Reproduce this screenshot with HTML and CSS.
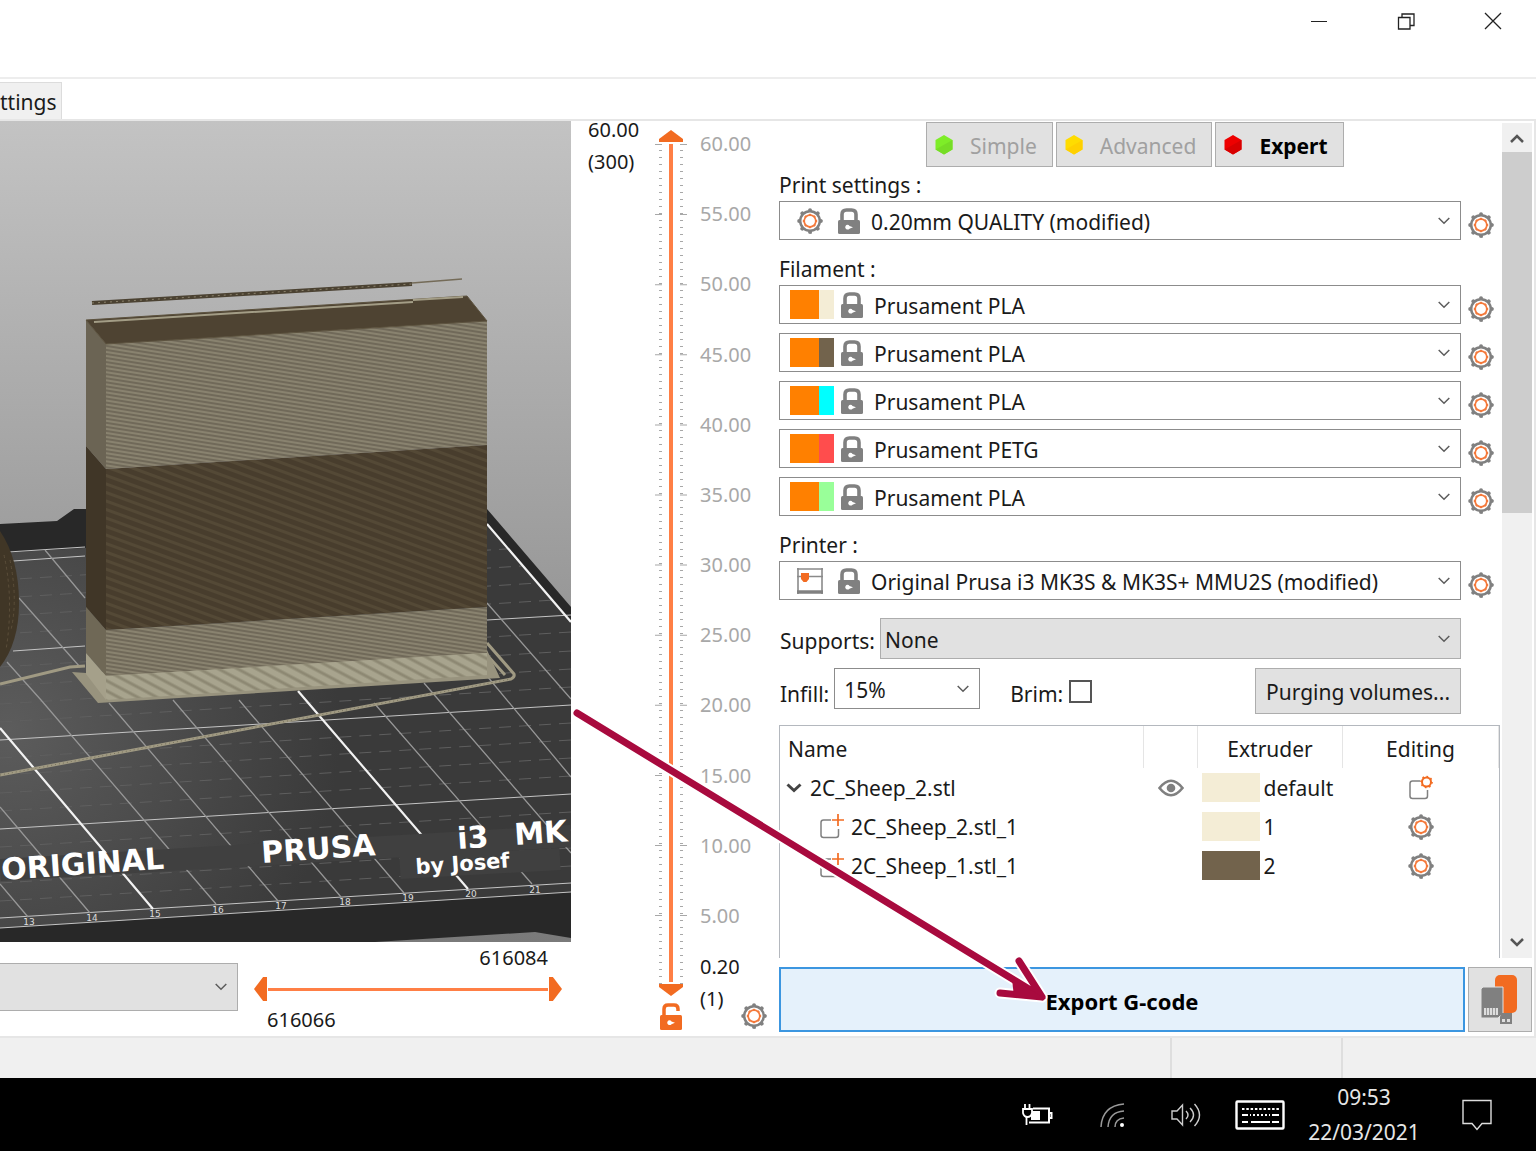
FILE: index.html
```html
<!DOCTYPE html>
<html lang="en">
<head>
<meta charset="utf-8">
<meta name="viewport" content="width=device-width, initial-scale=1">
<title>PrusaSlicer</title>
<link rel="stylesheet" href="styles.css">
</head>
<body>
<svg class="defs" aria-hidden="true">
  <symbol id="gear" viewBox="0 0 26 26">
    <circle cx="13" cy="13" r="9.8" fill="#fff" stroke="#808080" stroke-width="2.500"/>
    <circle cx="13" cy="13" r="10.9" fill="none" stroke="#808080" stroke-width="3.800" stroke-linecap="round" pathLength="80" stroke-dasharray="0.100 9.900"/>
    <circle cx="13" cy="13" r="5.800" fill="none" stroke="#f4793b" stroke-width="1.700"/>
    <circle cx="13" cy="13" r="6.600" fill="none" stroke="#f4793b" stroke-width="1.200" pathLength="80" stroke-dasharray="5 5" stroke-dashoffset="2.500"/>
  </symbol>
  <symbol id="lock" viewBox="0 0 22 26">
    <path d="M4 13V6.500Q4 2 8.500 2H13.500Q18 2 18 6.500V13" fill="none" stroke="#808080" stroke-width="3.600"/>
    <rect y="12" width="22" height="14" rx="1.500" fill="#808080"/>
    <path d="M9.500 16.800a2.400 2.400 0 1 0 2 3.900L15 19.300l-3.500-1.300a2.400 2.400 0 0 0-2-1.200z" fill="#fff"/>
  </symbol>
  <symbol id="chevron" viewBox="0 0 12 8"><path d="M.7 1l5.300 5.300L11.300 1" fill="none" stroke="#5c5c5c" stroke-width="1.500"/></symbol>
  <symbol id="part" viewBox="0 0 26 26">
    <path d="M12 6H4.500Q2 6 2 8.500V21Q2 23.500 4.500 23.500H17Q19.500 23.500 19.500 21V15" fill="none" stroke="#808080" stroke-width="1.500"/>
    <path d="M19 0v12M13 6h12" stroke="#f26b21" stroke-width="1.700"/>
  </symbol>
</svg>

<header class="titlebar">
  <button class="win-btn" aria-label="Minimize"><svg width="18" height="18"><path d="M1 9.500h16" stroke="#222" fill="none"/></svg></button>
  <button class="win-btn" aria-label="Restore"><svg width="18" height="18" fill="none" stroke="#222" stroke-width="1.300"><path d="M1.500 5.500h11.500v11.500h-11.500zM5 5.500V2h12v11.500h-4"/></svg></button>
  <button class="win-btn" aria-label="Close"><svg width="18" height="18"><path d="M1 1l16 16M17 1L1 17" stroke="#222" stroke-width="1.300"/></svg></button>
</header>
<nav class="tabs"><button class="tab">ttings</button></nav>

<main class="main">
  <section class="preview">
    <svg class="scene" viewBox="0 121 571 821" preserveAspectRatio="xMinYMin slice" role="img" aria-label="Sliced model on the print bed">
      <defs>
        <linearGradient id="sky" x1="0" y1="0" x2="0" y2="1"><stop offset="0" stop-color="#c3c3c3"/><stop offset="1" stop-color="#7a7a7a"/></linearGradient>
        <radialGradient id="bed" gradientUnits="userSpaceOnUse" cx="10" cy="730" r="330"><stop offset="0" stop-color="#5c5c5c"/><stop offset="1" stop-color="#3a3a3a"/></radialGradient>
        <clipPath id="sheet"><path d="M0 553l487-29 84 98v270L0 928z"/></clipPath>
        <pattern id="light" width="20" height="4" patternUnits="userSpaceOnUse" patternTransform="rotate(9)"><rect width="20" height="4" fill="#7c7564"/><path d="M0 1h20" stroke="#645d4d"/><path d="M0 3h20" stroke="#969079"/></pattern>
        <pattern id="dark" width="40" height="8" patternUnits="userSpaceOnUse" patternTransform="rotate(20)"><rect width="40" height="8" fill="#483d2d"/><path d="M0 2.500h40" stroke="#544936" stroke-width="3"/></pattern>
        <pattern id="pale" width="40" height="9" patternUnits="userSpaceOnUse" patternTransform="rotate(28)"><rect width="40" height="9" fill="#a8a48e"/><path d="M0 2h40" stroke="#8d8873" stroke-width="3"/></pattern>
      </defs>
      <path fill="url(#sky)" d="M0 121h571v821H0z"/>
      <path fill="#282828" d="M0 524l57-3 17-12h413l84 98v331l-36-6-160 10H0z"/>
      <path fill="url(#bed)" d="M0 553l487-29 84 98v270L0 928z"/>
      <g stroke="#5f5f5f" stroke-dasharray="12 8" clip-path="url(#sheet)">
        <path d="M0 580l571-35M0 598l571-35M0 616l571-35M0 634l571-35M0 667l571-35M0 686l571-35M0 704l571-35M0 722l571-35M0 758l571-35M0 775l571-35M0 793l571-35M0 811l571-35M0 847l571-35M0 865l571-35M0 883l571-35M0 901l571-35"/>
      </g>
      <path d="M8 552l77-5M13 561l72-5M13 651l72-5M487 620l84-5M0 740l571-35M0 829l571-35M0 918l571-35M0 928l571-36" stroke="#c4c4c4" fill="none"/>
      <path d="M45 550l40 48M19 598l61 69M7 662l34 38 175 204M109 703l169 198M173 700l168 197M239 700l165 193M374 703l158 181M424 683l147 170M487 676l84 101M487 603l84 96M0 807l90 106M0 884l28 33" stroke="#979797" fill="none" stroke-width="1.300"/>
      <path d="M0 728l153 181M298 691l170 198M487 524l84 98" stroke="#f2f2f2" fill="none" stroke-width="2.200"/>
      <path d="M0 870L571 836M400 868l160-9" stroke="#404040" stroke-width="22"/>
      <path fill="#403626" d="M0 531q19 28 19 72 0 40-19 64z"/>
      <path d="M4 555q10 45 2 95M10 560q8 40 1 70" stroke="#5b4e3a" fill="none" stroke-dasharray="3 3"/>
      <path d="M0 775l511-96q4-2 3-5l-27-31M487 655l18 20M0 684l70-17 15-1" fill="none" stroke="#a09a83" stroke-width="3"/>
      <path d="M0 775l511-96" stroke="#77715c" stroke-dasharray="1 3" fill="none"/>
      <path fill="#98937e" d="M72 672l14 1 401-23 13 28-402 25z"/>
      <path fill="#6b6454" d="M86 320l20 24v125l-20-23z"/>
      <path fill="#403627" d="M86 446l20 23v161l-20-23z"/>
      <path fill="#6f6856" d="M86 607l20 23v46l-20-23z"/>
      <path fill="#a5a08a" d="M86 653l20 23v24l-20-26z"/>
      <path fill="url(#light)" d="M106 344l381-23v124l-381 24z"/>
      <path fill="url(#dark)" d="M106 469l381-24v162l-381 23z"/>
      <path fill="url(#light)" d="M106 630l381-23v46l-381 23z"/>
      <path fill="url(#pale)" d="M106 676l381-23v22l-381 25z"/>
      <path fill="#4e4332" stroke="#5d533f" d="M86 320l381-24 20 25-381 23z"/>
      <path d="M94 322l319-20M413 300l50-3" stroke="#a39d86" stroke-width="2"/>
      <path d="M92 303l320-19" stroke="#4b4232" stroke-width="4"/>
      <path d="M92 303l320-19" stroke="#8b826c" stroke-dasharray="2 4"/>
      <path d="M412 283l50-4" stroke="#746b58" stroke-width="1.500"/>
      <g class="bed-title">
        <text transform="translate(2 880) rotate(-4)">ORIGINAL</text>
        <text transform="translate(262 863) rotate(-4)">PRUSA</text>
        <text transform="translate(458 849) rotate(-4)">i3</text>
        <text transform="translate(515 845) rotate(-4)">MK</text>
      </g>
      <text class="bed-author" transform="translate(416 874) rotate(-4)">by Josef</text>
      <g class="bed-scale">
        <text x="29" y="925">13</text><text x="92" y="921">14</text><text x="155" y="917">15</text><text x="218" y="913">16</text><text x="281" y="909">17</text><text x="345" y="905">18</text><text x="408" y="901">19</text><text x="471" y="897">20</text><text x="535" y="893">21</text>
      </g>
    </svg>
    <div class="moves">
      <div class="view-select"><select aria-label="View"><option></option></select><svg class="chev"><use href="#chevron"/></svg></div>
      <div class="hslider">
        <output class="max">616084</output>
        <div class="hrange">
          <input type="range" class="r-low" min="0" max="100" value="0" aria-label="First move">
          <input type="range" class="r-high" min="0" max="100" value="100" aria-label="Last move">
        </div>
        <output class="min">616066</output>
      </div>
    </div>
  </section>

  <section class="layers">
    <div class="current"><span>60.00</span><span>(300)</span></div>
    <div class="track">
      <svg class="ticks" width="32" height="870" viewBox="0 0 32 870">
        <g stroke="#a8a8a8" fill="none">
          <path d="M5.500 7V842M26.500 7V842" stroke-width="3" stroke-dasharray="1 6"/>
          <path d="M3.500 1V842M28.500 1V842" stroke-width="7" stroke-dasharray="1 69.100"/>
        </g>
      </svg>
      <div class="vrange">
        <input type="range" class="r-top" min="0" max="300" value="300" aria-label="Top layer">
        <input type="range" class="r-bottom" min="0" max="300" value="0" aria-label="Bottom layer">
      </div>
      <button class="bare unlock" aria-label="Unlock"><svg width="24" height="27" viewBox="0 0 24 27"><path d="M5 13V6Q5 2 9 2H15Q19 2 19 6V8" fill="none" stroke="#f26b21" stroke-width="3.500"/><rect x="1" y="12" width="22" height="15" rx="1.500" fill="#f26b21"/><path d="M10.500 17.300a2.400 2.400 0 1 0 2 3.900L16 19.800l-3.500-1.300a2.400 2.400 0 0 0-2-1.200z" fill="#fff"/></svg></button>
    </div>
    <div class="scale">
      <ol>
        <li>60.00</li><li>55.00</li><li>50.00</li><li>45.00</li><li>40.00</li><li>35.00</li><li>30.00</li><li>25.00</li><li>20.00</li><li>15.00</li><li>10.00</li><li>5.00</li>
      </ol>
      <div class="lowest"><span>0.20</span><span>(1)</span></div>
      <button class="bare layer-gear" aria-label="Slider settings"><svg class="gear"><use href="#gear"/></svg></button>
    </div>
  </section>

  <section class="panel">
    <div class="panel-body">
      <div class="form">
        <div class="modes">
          <button class="mode"><svg width="18" height="20"><path d="M9 0l8.500 5v9.500L9 19.500.5 14.500V5z" fill="#7eed28"/><path d="M17.500 5v9.500L9 19.500.5 14.500z" fill="#76dd26"/></svg><span>Simple</span></button>
          <button class="mode"><svg width="18" height="20"><path d="M9 0l8.500 5v9.500L9 19.500.5 14.500V5z" fill="#ffdc00"/><path d="M17.500 5v9.500L9 19.500.5 14.500z" fill="#ffd000"/></svg><span>Advanced</span></button>
          <button class="mode active"><svg width="18" height="20"><path d="M9 0l8.500 5v9.500L9 19.500.5 14.500V5z" fill="#ee0000"/><path d="M17.500 5v9.500L9 19.500.5 14.500z" fill="#d80000"/></svg><span>Expert</span></button>
        </div>

        <label class="caption" for="print">Print settings :</label>
        <div class="line">
          <div class="combo preset"><svg class="gear"><use href="#gear"/></svg><svg class="lock"><use href="#lock"/></svg><select id="print"><option>0.20mm QUALITY (modified)</option></select><svg class="chev"><use href="#chevron"/></svg></div>
          <button class="bare edit" aria-label="Edit print settings"><svg class="gear"><use href="#gear"/></svg></button>
        </div>

        <label class="caption" for="fil1">Filament :</label>
        <div class="filaments">
          <div class="line"><div class="combo"><span class="swatch cream"></span><svg class="lock"><use href="#lock"/></svg><select id="fil1"><option>Prusament PLA</option></select><svg class="chev"><use href="#chevron"/></svg></div><button class="bare edit" aria-label="Edit filament 1"><svg class="gear"><use href="#gear"/></svg></button></div>
          <div class="line"><div class="combo"><span class="swatch brown"></span><svg class="lock"><use href="#lock"/></svg><select aria-label="Filament 2"><option>Prusament PLA</option></select><svg class="chev"><use href="#chevron"/></svg></div><button class="bare edit" aria-label="Edit filament 2"><svg class="gear"><use href="#gear"/></svg></button></div>
          <div class="line"><div class="combo"><span class="swatch cyan"></span><svg class="lock"><use href="#lock"/></svg><select aria-label="Filament 3"><option>Prusament PLA</option></select><svg class="chev"><use href="#chevron"/></svg></div><button class="bare edit" aria-label="Edit filament 3"><svg class="gear"><use href="#gear"/></svg></button></div>
          <div class="line"><div class="combo"><span class="swatch red"></span><svg class="lock"><use href="#lock"/></svg><select aria-label="Filament 4"><option>Prusament PETG</option></select><svg class="chev"><use href="#chevron"/></svg></div><button class="bare edit" aria-label="Edit filament 4"><svg class="gear"><use href="#gear"/></svg></button></div>
          <div class="line"><div class="combo"><span class="swatch green"></span><svg class="lock"><use href="#lock"/></svg><select aria-label="Filament 5"><option>Prusament PLA</option></select><svg class="chev"><use href="#chevron"/></svg></div><button class="bare edit" aria-label="Edit filament 5"><svg class="gear"><use href="#gear"/></svg></button></div>
        </div>

        <label class="caption" for="printer">Printer :</label>
        <div class="line">
          <div class="combo preset"><svg class="printer" viewBox="0 0 26 26"><path d="M1 0v26M25 0v26" stroke="#8a8a8a" stroke-width="1.600"/><path d="M0 1h26M0 8.500h26" stroke="#8a8a8a" stroke-width="1.600"/><path d="M0 24h26" stroke="#808080" stroke-width="3.500"/><path d="M4 5h8v6l-2.500 3h-3L4 11z" fill="#f26b21"/></svg><svg class="lock"><use href="#lock"/></svg><select id="printer"><option>Original Prusa i3 MK3S &amp; MK3S+ MMU2S (modified)</option></select><svg class="chev"><use href="#chevron"/></svg></div>
          <button class="bare edit" aria-label="Edit printer"><svg class="gear"><use href="#gear"/></svg></button>
        </div>

        <div class="supports">
          <label for="supports">Supports:</label>
          <div class="combo grey"><select id="supports"><option>None</option></select><svg class="chev"><use href="#chevron"/></svg></div>
        </div>
        <div class="infill">
          <label for="infill">Infill:</label>
          <div class="combo small"><select id="infill"><option>15%</option></select><svg class="chev"><use href="#chevron"/></svg></div>
          <label class="brim" for="brim">Brim:</label><input type="checkbox" id="brim">
          <button class="purge">Purging volumes...</button>
        </div>

        <div class="objects">
          <table>
            <colgroup><col><col class="c-eye"><col class="c-ext"><col class="c-edit"></colgroup>
            <thead><tr><th>Name</th><th></th><th>Extruder</th><th>Editing</th></tr></thead>
            <tbody>
              <tr><td><span class="node"><svg width="16" height="10"><path d="M1.500 1.500L8 7.500l6.500-6" fill="none" stroke="#444" stroke-width="3"/></svg>2C_Sheep_2.stl</span></td>
                <td><svg class="eye" width="26" height="18"><path d="M1.500 9Q13-5.500 24.500 9 13 23.500 1.500 9z" fill="none" stroke="#808080" stroke-width="2.600"/><circle cx="13" cy="9" r="4.300" fill="#808080"/></svg></td>
                <td><span class="ext"><i class="chip cream"></i>default</span></td>
                <td class="mid"><svg class="gear" viewBox="0 0 26 26"><path d="M12 6H4.500Q2 6 2 8.500V21Q2 23.500 4.500 23.500H17Q19.500 23.500 19.500 21V15" fill="none" stroke="#808080" stroke-width="1.500"/><circle cx="18.500" cy="7" r="4.500" fill="#fff" stroke="#f26b21" stroke-width="2"/><circle cx="18.500" cy="7" r="5.600" fill="none" stroke="#f26b21" stroke-width="1.500" pathLength="80" stroke-dasharray="4 6"/></svg></td></tr>
              <tr><td><span class="node child"><svg class="gear"><use href="#part"/></svg>2C_Sheep_2.stl_1</span></td><td></td><td><span class="ext"><i class="chip cream"></i>1</span></td><td class="mid"><svg class="gear"><use href="#gear"/></svg></td></tr>
              <tr><td><span class="node child"><svg class="gear"><use href="#part"/></svg>2C_Sheep_1.stl_1</span></td><td></td><td><span class="ext"><i class="chip brown"></i>2</span></td><td class="mid"><svg class="gear"><use href="#gear"/></svg></td></tr>
            </tbody>
          </table>
        </div>
      </div>
      <div class="scrollbar">
        <svg width="14" height="9"><path d="M1 8l6-6 6 6" fill="none" stroke="#555" stroke-width="2.500"/></svg>
        <div class="thumb"></div>
        <svg width="14" height="9"><path d="M1 1l6 6 6-6" fill="none" stroke="#555" stroke-width="2.500"/></svg>
      </div>
    </div>
    <div class="actions">
      <button class="export">Export G-code</button>
      <button class="removable" aria-label="Export to SD card / flash drive"><svg width="38" height="50" viewBox="0 0 38 50"><rect x="14" width="22" height="38" rx="5" fill="#f26b21"/><path d="M0 14l2-2h20v26l-5 5H0z" fill="#808080" stroke="#e1e1e1"/><path d="M3 33h14v7H3z" fill="#ddd"/><path d="M5.500 33v7M8.500 33v7M11.500 33v7M14.500 33v7" stroke="#999"/><path d="M20 38h11v11H19v-7z" fill="#808080"/><path d="M21 44h3v3h-3zM26 44h3v3h-3z" fill="#ddd"/></svg></button>
    </div>
    <svg class="pointer" width="480" height="300" viewBox="572 704 480 300" aria-hidden="true">
      <g fill="none" stroke-linecap="round" stroke-linejoin="round"><path d="M577 712L1042 996M1019 960L1042 996 1000 992" stroke="#fff" stroke-width="11"/><path d="M577 712L1042 996M1019 960L1042 996 1000 992" stroke="#a80a3e" stroke-width="7"/></g>
      <path d="M1012 978L1046 998 1014 996z" fill="#a80a3e"/>
    </svg>
  </section>
</main>

<footer class="status"><span></span><span></span><span></span></footer>
<div class="taskbar">
  <button class="tray w-bat" aria-label="Battery"><svg width="32" height="24" fill="none" stroke="#fff"><path d="M12 5.500h16v14H8M28 10h2.500v5H28" stroke-width="2"/><path d="M10 8h9v9h-9z" fill="#fff" stroke="none"/><path d="M4 1v6M8.500 1v6M5.500 12v10" stroke-width="1.800"/><path d="M2 6h9v4q-1 4-4.500 4T2 10z" stroke-width="1.800" fill="#000"/></svg></button>
  <button class="tray w-wifi" aria-label="Wi-Fi"><svg width="26" height="26" fill="none" stroke="#9a9a9a" stroke-width="1.500"><path d="M1 25Q2 4 24 2M8 25Q9 10 24 9M15 25Q15 17 24 16"/><circle cx="22" cy="23" r="2" fill="#fff" stroke="none"/></svg></button>
  <button class="tray w-snd" aria-label="Volume"><svg width="30" height="26" fill="none" stroke="#ccc" stroke-width="1.400"><path d="M1 9h5l5.500-6v20L6 17H1zM15 9q4 4 0 8M19 6q7 7 0 14M23.500 2q10 11 0 22"/></svg></button>
  <button class="tray w-kbd" aria-label="Touch keyboard"><svg width="50" height="30" fill="none" stroke="#fff"><rect x="1.500" y="1.500" width="47" height="27" rx="1" stroke-width="2.400"/><path d="M7 9h37" stroke-width="2" stroke-dasharray="2.500 1.800"/><path d="M7 15h6M15 15h20M37 15h7" stroke-width="2"/><path d="M16 15h20" stroke="#000" stroke-width="3" stroke-dasharray="2 2"/><path d="M7 22h6M16 22h19M37 22h7" stroke-width="2"/></svg></button>
  <button class="tray w-clock"><time>09:53</time><time>22/03/2021</time></button>
  <button class="tray w-note" aria-label="Notifications"><svg width="30" height="32"><path d="M1 1.500h28v23h-9l-5 6-5-6H1z" fill="none" stroke="#ddd" stroke-width="1.400"/></svg></button>
</div>
</body>
</html>
```
FILE: styles.css
```css
* { box-sizing: border-box; }
body {
  margin: 0;
  min-height: 100vh;
  display: flex;
  flex-direction: column;
  background: #fff;
  color: #1a1a1a;
  font: 21px/32px "Noto Sans", "Open Sans", sans-serif;
}
button, select, input, output { font: inherit; color: inherit; margin: 0; }
button { padding: 0; border: 0; background: none; }
svg { display: block; flex: none; }
.defs { position: absolute; width: 0; height: 0; }

.titlebar { display: flex; justify-content: flex-end; height: 79px; border-bottom: 2px solid #ededed; }
.win-btn { width: 87px; height: 42px; display: grid; place-items: center; }
.tabs { display: flex; align-items: flex-end; height: 42px; border-bottom: 2px solid #e6e6e6; }
.tab { height: 37px; padding: 2px 4px 0 0; background: #f0f0f0; border: 1px solid #dcdcdc; border-width: 1px 1px 0 0; }

.main { flex: 1; display: flex; border-bottom: 2px solid #e6e6e6; }

/* 3D preview */
.preview { flex: 1; min-width: 0; display: flex; flex-direction: column; font-size: 20px; }
.scene { flex: 1 1 0; width: 100%; min-height: 0; }
.bed-title { font: 700 30px "DejaVu Sans", sans-serif; fill: #fff; }
.bed-author { font: 700 21px "DejaVu Sans", sans-serif; fill: #fff; }
.bed-scale { font: 9px "DejaVu Sans", sans-serif; fill: #ddd; text-anchor: middle; }
.moves { display: flex; height: 94px; }
.view-select { width: 238px; height: 48px; margin-top: 21px; display: flex; align-items: center; padding-right: 10px; background: #e1e1e1; border: 1px solid #adadad; border-left: 0; }
select { appearance: none; flex: 1; min-width: 0; height: 100%; border: 0; padding: 2px 0 0; background: none; outline: 0; }
.chev { width: 12px; height: 8px; }
.hslider { display: flex; flex-direction: column; width: 308px; margin-left: 16px; }
.hslider output { line-height: 32px; }
.max { text-align: right; padding-right: 14px; }
.min { padding-left: 13px; }
.hrange { position: relative; height: 30px; background: linear-gradient(#ff7f45, #ff7f45) center / 280px 3px no-repeat; }
.hrange input { position: absolute; inset: 0; width: 100%; height: 100%; }
input[type="range"] { appearance: none; background: none; pointer-events: none; }
input[type="range"]::-webkit-slider-thumb { appearance: none; pointer-events: auto; background: #f26b21; border: 0; border-radius: 0; width: 13px; height: 24px; }
.r-low::-webkit-slider-thumb { clip-path: polygon(100% 0, 70% 0, 0 50%, 70% 100%, 100% 100%); }
.r-high::-webkit-slider-thumb { clip-path: polygon(0 0, 30% 0, 100% 50%, 30% 100%, 0 100%); }

/* layer slider */
.layers { width: 208px; display: flex; padding-left: 17px; font-size: 20px; }
.current { width: 67px; display: flex; flex-direction: column; margin-top: -7px; }
.track { width: 32px; padding-top: 9px; position: relative; display: flex; flex-direction: column; align-items: center; }
.ticks { position: absolute; left: 0; top: 22px; }
.vrange { position: relative; width: 24px; height: 866px; background: linear-gradient(#ff7f45, #ff7f45) center / 4px 838px no-repeat; }
.vrange input { position: absolute; inset: 0; width: 24px; height: 100%; writing-mode: vertical-lr; direction: rtl; }
.vrange input[type="range"]::-webkit-slider-thumb { width: 24px; height: 12px; }
.r-top::-webkit-slider-thumb { clip-path: polygon(0 75%, 50% 0, 100% 75%, 100% 100%, 0 100%); }
.r-bottom::-webkit-slider-thumb { clip-path: polygon(0 0, 100% 0, 100% 25%, 50% 100%, 0 25%); }
.unlock { margin-top: 7px; }
.scale { flex: 1; padding: 7px 0 0 13px; }
.scale ol { list-style: none; margin: 0 0 19px; padding: 0; height: 804px; display: flex; flex-direction: column; justify-content: space-between; color: #a8a8a8; }
.lowest { display: flex; flex-direction: column; }
.layer-gear { margin: -12px 0 0 41px; }
.bare { display: block; line-height: 0; }
.gear, .printer { width: 26px; height: 26px; }
.lock { width: 22px; height: 26px; }

/* right panel */
.panel { position: relative; width: 757px; display: flex; flex-direction: column; padding: 1px 2px 4px 0; border-right: 2px solid #e6e6e6; }
.panel-body { flex: 1; display: flex; }
.form { flex: 1; min-width: 0; display: flex; flex-direction: column; }
.modes { display: flex; gap: 3px; margin-left: 147px; }
.mode { height: 45px; display: flex; align-items: center; gap: 17px; padding: 0 15px 0 8px; background: #e1e1e1; border: 1px solid #adadad; color: #a0a0a0; }
.mode span { padding-top: 3px; }
.mode.active { color: #000; font-weight: 700; }
.caption { height: 34px; padding-top: 2px; }
.line { display: flex; margin-right: 4px; }
.line .combo { flex: 1; }
.combo { height: 39px; display: flex; align-items: center; border: 1px solid #8c8c8c; padding: 0 10px; background: #fff; }
.combo .lock { margin: 0 11px 0 7px; }
.combo.preset { padding-left: 17px; }
.combo.preset .lock { margin-left: 15px; }
.edit { width: 35px; padding: 8px 0 0 7px; }
.line + .caption, .filaments + .caption { margin-top: 11px; }
.filaments { display: flex; flex-direction: column; gap: 9px; }
.swatch { width: 44px; height: 29px; background: linear-gradient(90deg, #ff8000 29px, var(--c) 29px); }
.cream { --c: #f4edd6; }
.brown { --c: #72634c; }
.cyan { --c: #00ffff; }
.red { --c: #ff4d4d; }
.green { --c: #99ff99; }
.supports { display: flex; align-items: center; margin: 18px 39px 0 1px; }
.supports .combo { flex: 1; height: 41px; margin-left: 5px; padding-left: 4px; }
.combo.grey { background: #e1e1e1; border-color: #adadad; }
.supports label, .infill label { padding-top: 5px; }
.infill { display: flex; margin: 9px 39px 0 1px; align-items: center; height: 46px; }
.combo.small { width: 146px; height: 41px; margin: 0 30px 5px 5px; padding-left: 9px; }
#brim { appearance: none; width: 23px; height: 23px; border: 2px solid #555; background: #fff; margin-left: 6px; }
.purge { margin-left: auto; width: 206px; height: 46px; padding-top: 2px; background: #e1e1e1; border: 1px solid #adadad; }
.objects { flex: 1; margin-top: 11px; border: 1px solid #b4b8be; border-bottom: 0; }
table { width: 100%; table-layout: fixed; border-collapse: collapse; }
th, td { padding: 0; text-align: left; font-weight: 400; }
th { height: 42px; padding: 3px 0 0 8px; border-right: 1px solid #e5e5e5; }
th:nth-child(3), th:nth-child(4) { text-align: center; padding-left: 0; }
td { height: 39px; }
.c-eye { width: 54px; }
.c-ext { width: 145px; }
.c-edit { width: 156px; }
.node { display: flex; align-items: center; gap: 8px; padding-left: 6px; }
.node.child { padding-left: 39px; gap: 6px; }
.eye, .mid .gear { margin: 0 auto; }
.ext { display: flex; align-items: center; gap: 4px; padding-left: 4px; }
.chip { width: 58px; height: 29px; background: var(--c); }
.scrollbar { width: 30px; margin: 1px 0 0 2px; background: #f0f0f0; display: flex; flex-direction: column; align-items: center; padding: 11px 0; }
.thumb { width: 100%; height: 361px; margin: 9px 0 auto; background: #cdcdcd; }
.actions { display: flex; gap: 3px; margin-top: 9px; height: 65px; }
.export { flex: 1; padding-top: 3px; background: #e5f1fb; border: 2px solid #3c96e0; color: #000; font-size: 22px; font-weight: 700; }
.removable { width: 64px; display: grid; place-items: center; background: #e1e1e1; border: 1px solid #adadad; }
.pointer { position: absolute; left: -207px; bottom: 31px; pointer-events: none; }

/* status bar and taskbar */
.status { display: grid; grid-template-columns: 1fr 171px 195px; height: 40px; background: #f0f0f0; }
.status span + span { border-left: 2px solid #dedede; }
.taskbar { display: flex; justify-content: flex-end; height: 73px; padding-right: 10px; background: #000; color: #e6e6e6; }
.tray { display: flex; flex-direction: column; align-items: center; justify-content: center; }
.w-bat { width: 74px; }
.w-wifi { width: 78px; }
.w-snd { width: 68px; }
.w-kbd { width: 80px; }
.w-clock { width: 128px; }
.w-clock time { line-height: 35px; }
.w-note { width: 98px; }
```
